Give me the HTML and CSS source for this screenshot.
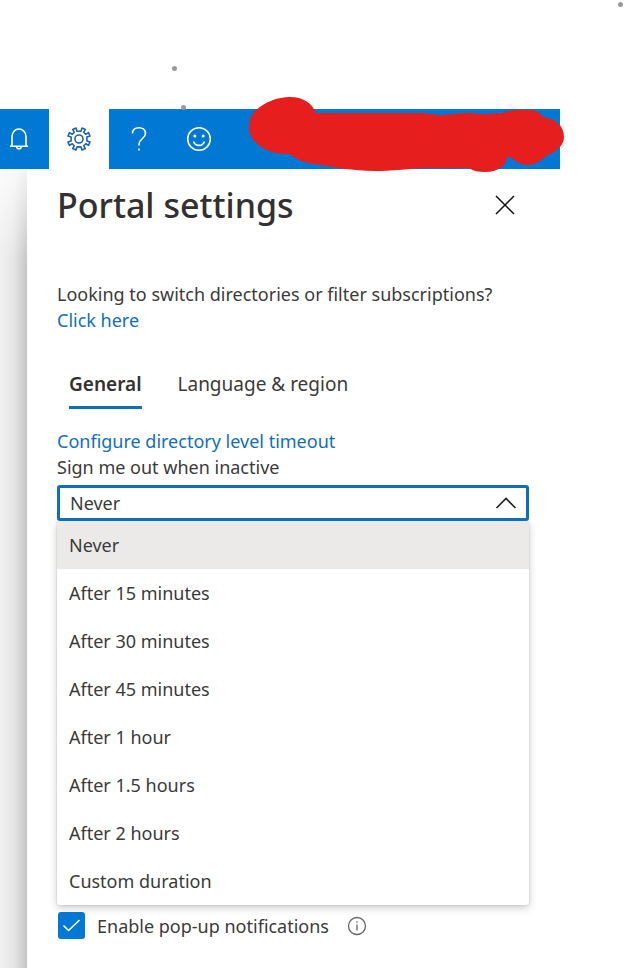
FILE: index.html
```html
<!DOCTYPE html>
<html lang="en">
<head>
<meta charset="utf-8">
<meta name="viewport" content="width=device-width, initial-scale=1">
<title>Portal settings</title>
<link rel="stylesheet" href="styles.css">
</head>
<body>
<span class="dot dot-corner"></span>
<span class="dot dot-upper"></span>
<span class="dot dot-bar"></span>
<header class="topbar">
  <button class="tool tool-first" type="button" aria-label="Notifications">
    <svg class="icon" viewBox="0 0 26 26"><path d="M6 20V10.500a7 7.500 0 0 1 14 0V20M4 20.200h18M10.700 20.500a2.300 2.300 0 0 0 4.600 0"/></svg>
  </button>
  <button class="tool tool-active" type="button" aria-label="Settings">
    <svg class="icon" viewBox="0 0 26 26"><path d="M10 2 L11 5.200 H15 L16 2 L19.300 3.400 L17.700 6.300 L19.700 8.300 L22.600 6.700 L24 10 L20.900 11 V15 L24 16 L22.600 19.300 L19.700 17.700 L17.700 19.700 L19.300 22.600 L16 24 L15 20.900 H11 L10 24 L6.700 22.600 L8.300 19.700 L6.300 17.700 L3.400 19.300 L2 16 L5.100 15 V11 L2 10 L3.400 6.700 L6.300 8.300 L8.300 6.300 L6.700 3.400 Z"/><circle cx="13" cy="13" r="4"/></svg>
  </button>
  <button class="tool" type="button" aria-label="Help">
    <svg class="icon" viewBox="0 0 26 26"><path d="M6.500 7.500C6.500 3.500 9.500 1.700 13 1.700s6.500 2 6.500 5.800c0 5-6.500 5.500-6.500 10.500v1.500M13 22.600v2"/></svg>
  </button>
  <button class="tool" type="button" aria-label="Feedback">
    <svg class="icon" viewBox="0 0 26 26"><circle cx="13" cy="13" r="11.300"/><path d="M7.500 15.500c2 5.200 9 5.200 11 0"/><circle class="eye" cx="8.800" cy="10" r="1.500"/><circle class="eye" cx="17.200" cy="10" r="1.500"/></svg>
  </button>
  <svg class="scribble" viewBox="0 0 317 77" aria-hidden="true"><path d="M1 31C1 25 3 19 7 15C17 6 29 1 42 1C55 1 64 7 68 17H172C182 17 185 19 194 19C205 18 212 17 222 17C230 17 228 18 234 18C244 18 249 17 254 17C260 15 267 14 274 14C282 14 287 14 290 16C294 18 293 20 296 21C308 23 316 30 316 41C316 48 311 53 304 57C296 60 291 69 280 69C271 69 266 63 260 60C258 70 250 76 237 76C231 76 225 75 221 72H174C157 73 144 75 127 75C105 75 86 71 67 68C57 67 47 63 42 58C20 59 1 47 1 31Z"/></svg>
</header>
<div class="workspace">
  <div class="backdrop"></div>
  <main class="panel">
    <div class="heading">
      <h1>Portal settings</h1>
      <button class="close" type="button" aria-label="Close">
        <svg viewBox="0 0 20 20"><path d="M1 1l18 18M19 1L1 19"/></svg>
      </button>
    </div>
    <p class="intro">Looking to switch directories or filter subscriptions?<br><a href="#directories">Click here</a></p>
    <nav class="tabs">
      <a class="tab tab-current" href="#general">General</a>
      <a class="tab" href="#language">Language &amp; region</a>
    </nav>
    <a class="timeout-link" href="#timeout">Configure directory level timeout</a>
    <label class="field-label" for="signout">Sign me out when inactive</label>
    <div class="combo">
      <select id="signout">
        <option>Never</option>
        <option>After 15 minutes</option>
        <option>After 30 minutes</option>
        <option>After 45 minutes</option>
        <option>After 1 hour</option>
        <option>After 1.5 hours</option>
        <option>After 2 hours</option>
        <option>Custom duration</option>
      </select>
      <svg class="chevron" viewBox="0 0 22 12" aria-hidden="true"><path d="M1.500 11L11 1.500L20.500 11"/></svg>
    </div>
    <div class="menu">
      <button class="choice choice-selected" type="button">Never</button>
      <button class="choice" type="button">After 15 minutes</button>
      <button class="choice" type="button">After 30 minutes</button>
      <button class="choice" type="button">After 45 minutes</button>
      <button class="choice" type="button">After 1 hour</button>
      <button class="choice" type="button">After 1.5 hours</button>
      <button class="choice" type="button">After 2 hours</button>
      <button class="choice" type="button">Custom duration</button>
    </div>
    <div class="popup-row">
      <input class="check" id="popups" type="checkbox" checked>
      <label for="popups">Enable pop-up notifications</label>
      <svg class="info" viewBox="0 0 20 20" aria-hidden="true"><circle cx="10" cy="10" r="8.500"/><path d="M10 8.500v6M10 5.200v1.600"/></svg>
    </div>
  </main>
</div>
</body>
</html>
```
FILE: styles.css
```css
* {
  box-sizing: border-box;
}

body {
  margin: 0;
  min-height: 100vh;
  padding-top: 109px;
  display: flex;
  flex-direction: column;
  background: #fff;
  color: #3b3a39;
  font-family: "Noto Sans", "Open Sans", sans-serif;
  font-size: 18px;
  line-height: 26px;
}

button,
select {
  font: inherit;
  color: inherit;
  border: 0;
  padding: 0;
  background: none;
}

a {
  color: #106ebe;
  text-decoration: none;
}

svg {
  display: block;
  fill: none;
  stroke: currentColor;
}

.dot {
  position: absolute;
  z-index: 1;
  width: 5px;
  height: 5px;
  border-radius: 50%;
  background: #999;
}

.dot-corner {
  top: 2px;
  right: 2px;
}

.dot-upper {
  top: 66px;
  left: 172px;
}

.dot-bar {
  top: 105px;
  left: 181px;
}

.topbar {
  position: relative;
  display: flex;
  height: 60px;
  margin-right: 65px;
  background: #0078d4;
  color: #fff;
}

.tool {
  display: flex;
  align-items: center;
  justify-content: center;
  width: 60px;
}

.tool-first {
  width: 49px;
  padding-right: 11px;
}

.tool-active {
  background: #fff;
  color: #1b62ae;
}

.icon {
  width: 26px;
  height: 26px;
  stroke-width: 1.600;
  stroke-linejoin: round;
}

.eye {
  fill: currentColor;
  stroke: none;
}

.scribble {
  position: absolute;
  top: -13px;
  left: 248px;
  width: 317px;
  height: 77px;
  fill: #e61e1e;
  stroke: none;
}

.workspace {
  display: flex;
  flex: 1;
}

.backdrop {
  width: 27px;
  background: linear-gradient(to bottom, rgba(255, 255, 255, 0.800), transparent 90px), linear-gradient(to right, #f0f0f0, #e6e6e6 50%, #c6c6c6);
}

.panel {
  flex: 1;
  padding: 9px 96px 28px 30px;
}

.heading {
  display: flex;
  align-items: center;
  justify-content: space-between;
  height: 54px;
  padding-right: 14px;
}

h1 {
  margin: 0;
  color: #323130;
  font-size: 34px;
  font-weight: 500;
  line-height: 52px;
}

.close svg {
  width: 20px;
  height: 20px;
  stroke: #111;
  stroke-width: 1.500;
}

.intro {
  margin: 49px 0 36px;
}

.tabs {
  display: flex;
  gap: 36px;
  padding-left: 12px;
  margin-bottom: 19px;
  font-size: 19px;
}

.tab {
  padding: 2px 0 9px;
  border-bottom: 3px solid transparent;
  color: inherit;
}

.tab-current {
  border-color: #106ebe;
  color: #323130;
  font-weight: 600;
}

.timeout-link,
.field-label {
  display: block;
}

.combo {
  position: relative;
  margin-top: 5px;
}

.combo select {
  display: block;
  width: 100%;
  height: 36px;
  padding: 0 10px;
  border: 3px solid #106ebe;
  border-radius: 3px;
  background: #fff;
  appearance: none;
  outline: 0;
}

.chevron {
  position: absolute;
  top: 12px;
  right: 12px;
  width: 22px;
  height: 12px;
  stroke: #222;
  stroke-width: 1.600;
  pointer-events: none;
}

.menu {
  border-radius: 0 0 3px 3px;
  background: #fff;
  box-shadow: 0 3px 8px rgba(0, 0, 0, 0.200), 0 0 2px rgba(0, 0, 0, 0.200);
}

.choice {
  display: block;
  width: 100%;
  height: 48px;
  padding: 0 12px;
  text-align: left;
}

.choice-selected {
  background: #ebeae9;
}

.popup-row {
  display: flex;
  align-items: center;
  gap: 12px;
  margin-top: 7px;
}

.check {
  appearance: none;
  width: 27px;
  height: 27px;
  margin: 0 0 0 1px;
  border-radius: 3px;
  background: #0078d4 url("data:image/svg+xml,%3Csvg xmlns='http://www.w3.org/2000/svg' viewBox='0 0 27 27'%3E%3Cpath d='M5.500 13.500L10.500 18.500L21.500 8' fill='none' stroke='white' stroke-width='1.600'/%3E%3C/svg%3E") center / 27px 27px;
}

.info {
  width: 20px;
  height: 20px;
  margin-left: 6px;
  stroke: #666;
  stroke-width: 1.300;
}
```
